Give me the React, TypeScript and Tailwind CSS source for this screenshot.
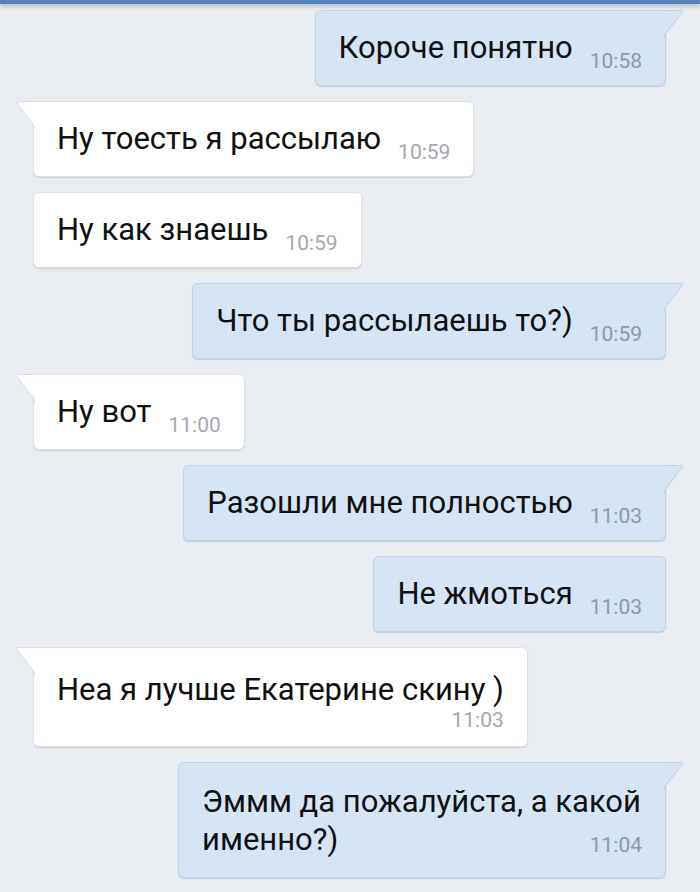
type Msg = {
  out: boolean;
  text: string;
  time: string;
  tail?: boolean;
  layout?: "inline" | "below" | "overlay";
};

const messages: Msg[] = [
  { out: true, text: "Короче понятно", time: "10:58", tail: true },
  { out: false, text: "Ну тоесть я рассылаю", time: "10:59", tail: true },
  { out: false, text: "Ну как знаешь", time: "10:59" },
  { out: true, text: "Что ты рассылаешь то?)", time: "10:59", tail: true },
  { out: false, text: "Ну вот", time: "11:00", tail: true },
  { out: true, text: "Разошли мне полностью", time: "11:03", tail: true },
  { out: true, text: "Не жмоться", time: "11:03" },
  { out: false, text: "Неа я лучше Екатерине скину )", time: "11:03", tail: true, layout: "below" },
  { out: true, text: "Эммм да пожалуйста, а какой именно?)", time: "11:04", tail: true, layout: "overlay" },
];

function Tail({ out }: { out: boolean }) {
  const fill = out ? "#d6e5f6" : "#ffffff";
  const stroke = out ? "#bfd0e4" : "#d9dde3";
  return (
    <svg
      width="20"
      height="28"
      viewBox="0 0 20 28"
      className={`absolute -top-px ${out ? "left-full -ml-px" : "right-full -mr-px -scale-x-100"}`}
    >
      <path d="M0 0 H17.5 Q20 0 18.6 2 L2.2 23.5 Q0 26 0 28 Z" fill={fill} />
      <path d="M0 0.5 H17.5 Q19.4 0.5 18.2 2.2 L1.8 23.5 Q0.5 25.5 0.5 28" fill="none" stroke={stroke} strokeWidth="1" />
    </svg>
  );
}

function Bubble({ m }: { m: Msg }) {
  const layout = m.layout ?? "inline";
  const corner = m.tail ? (m.out ? "rounded-tr-none" : "rounded-tl-none") : "";
  const skin = m.out
    ? "bg-[#d6e5f6] border border-[#c4d4e7] shadow-[0_1px_1px_rgba(120,145,175,0.35)]"
    : "bg-white border border-[#dde1e6] shadow-[0_1px_1px_rgba(0,0,0,0.12)]";
  const timeColor = m.out ? "text-[#8c99a8]" : "text-[#a3a9b0]";
  const timeCls = `text-[21px] leading-[24px] ${timeColor}`;

  let body;
  if (layout === "below") {
    body = (
      <div className="flex flex-col pt-[23px] pb-[14px]">
        <div className="leading-[38px] whitespace-nowrap">{m.text}</div>
        <div className={`self-end -mt-[1px] ${timeCls}`}>{m.time}</div>
      </div>
    );
  } else if (layout === "overlay") {
    body = (
      <div className="grid pt-[20px] pb-[18px]">
        <div className="col-start-1 row-start-1 max-w-[440px] leading-[38px]">{m.text}</div>
        <div className={`col-start-1 row-start-1 self-end justify-self-end -translate-y-[2px] ${timeCls}`}>{m.time}</div>
      </div>
    );
  } else {
    body = (
      <div className="flex items-end gap-[17px]">
        <div className="py-[18px] leading-[38px] whitespace-nowrap">{m.text}</div>
        <div className={`pb-[12px] ${timeCls}`}>{m.time}</div>
      </div>
    );
  }

  return (
    <div className={`flex ${m.out ? "justify-end pr-[34px]" : "justify-start pl-[33px]"}`}>
      <div className={`relative max-w-[520px] rounded-[6px] px-[23px] text-[31px] text-[#101010] ${skin} ${corner}`}>
        {m.tail && <Tail out={m.out} />}
        {body}
      </div>
    </div>
  );
}

export default function App() {
  return (
    <div
      className="w-[700px] h-[892px] overflow-hidden bg-[#e9edf2]"
      style={{ fontFamily: "Roboto, 'Noto Sans', sans-serif" }}
    >
      <div className="h-[4px] bg-[#5582b9] shadow-[0_2px_4px_rgba(40,60,90,0.35)]" />
      <div className="flex flex-col gap-[15px] pt-[6px]">
        {messages.map((m, i) => (
          <Bubble key={i} m={m} />
        ))}
      </div>
    </div>
  );
}
